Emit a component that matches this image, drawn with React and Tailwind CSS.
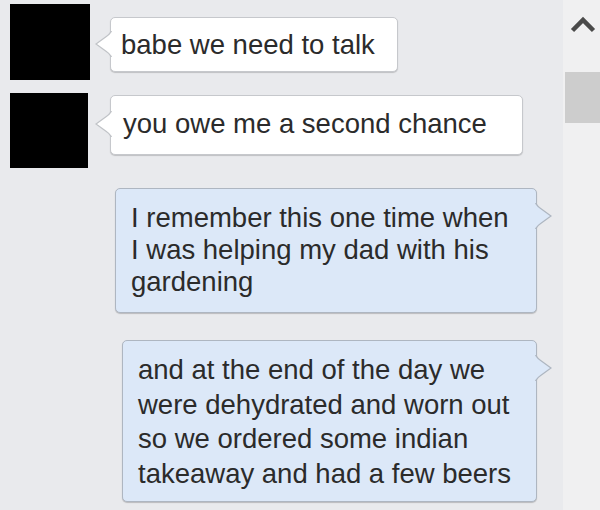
import React from "react";

function ArrowLeft({ fill, stroke, top }) {
  return (
    <svg
      className="absolute"
      style={{ left: -16, top }}
      width="17"
      height="26"
      viewBox="0 0 17 26"
    >
      <path d="M17 0 L17 26 C15 24 14 22 12 21 L1 13 L12 5 C14 4 15 2 17 0 Z" fill={fill} />
      <path
        d="M16.5 0 C15 2 14 4 12 5 L1 13 L12 21 C14 22 15 24 16.5 26"
        fill="none"
        stroke={stroke}
        strokeWidth="1.3"
      />
    </svg>
  );
}

function ArrowRight({ fill, stroke, top }) {
  return (
    <svg
      className="absolute"
      style={{ right: -16, top }}
      width="17"
      height="26"
      viewBox="0 0 17 26"
    >
      <path d="M0 0 L0 26 C2 24 3 22 5 21 L16 13 L5 5 C3 4 2 2 0 0 Z" fill={fill} />
      <path
        d="M0.5 0 C2 2 3 4 5 5 L16 13 L5 21 C3 22 2 24 0.5 26"
        fill="none"
        stroke={stroke}
        strokeWidth="1.3"
      />
    </svg>
  );
}

export default function App() {
  const font = { fontFamily: '"Liberation Sans", Arial, sans-serif' };
  return (
    <div
      className="w-[600px] h-[510px] flex overflow-hidden bg-[#e9eaed] text-[#2b2b2b]"
      style={font}
    >
      {/* main chat area */}
      <div className="flex-1 flex flex-col pt-[4px] pl-[10px]">
        {/* row 1 */}
        <div className="flex items-start">
          <div className="w-[80px] h-[76px] bg-black" />
          <div className="relative ml-[20px] mt-[13px] w-[288px] h-[55px] flex items-center pl-[10px] bg-white border border-[#c6c8cc] rounded-[5px] shadow-[0_1px_1px_rgba(0,0,0,0.18)]">
            <ArrowLeft fill="#ffffff" stroke="#c0c3c7" top={13} />
            <span className="text-[27.5px] leading-[30px] whitespace-nowrap">babe we need to talk</span>
          </div>
        </div>
        {/* row 2 */}
        <div className="flex items-start mt-[13px]">
          <div className="w-[78px] h-[75px] bg-black" />
          <div className="relative ml-[22px] mt-[2px] w-[413px] h-[60px] flex items-center pl-[12px] pb-[3px] bg-white border border-[#c6c8cc] rounded-[5px] shadow-[0_1px_1px_rgba(0,0,0,0.18)]">
            <ArrowLeft fill="#ffffff" stroke="#c0c3c7" top={15} />
            <span className="text-[27.5px] leading-[30px] whitespace-nowrap">you owe me a second chance</span>
          </div>
        </div>
        {/* row 3 */}
        <div className="flex justify-end pr-[26px] mt-[20px]">
          <div className="relative w-[422px] h-[125px] pl-[15px] pt-[13px] bg-[#dce8f8] border border-[#aeb6c1] rounded-[5px] shadow-[0_1px_1px_rgba(0,0,0,0.2)]">
            <ArrowRight fill="#dce8f8" stroke="#aeb6c1" top={14} />
            <p className="text-[27.5px] leading-[32px] whitespace-nowrap">
              I remember this one time when
              <br />
              I was helping my dad with his
              <br />
              gardening
            </p>
          </div>
        </div>
        {/* row 4 */}
        <div className="flex justify-end pr-[26px] mt-[27px]">
          <div className="relative w-[415px] h-[162px] pl-[15px] pt-[12px] bg-[#dce8f8] border border-[#aeb6c1] rounded-[5px] shadow-[0_1px_1px_rgba(0,0,0,0.2)]">
            <ArrowRight fill="#dce8f8" stroke="#aeb6c1" top={14} />
            <p className="text-[27.5px] leading-[34.5px] whitespace-nowrap">
              and at the end of the day we
              <br />
              were dehydrated and worn out
              <br />
              so we ordered some indian
              <br />
              takeaway and had a few beers
            </p>
          </div>
        </div>
      </div>
      {/* scrollbar */}
      <div className="w-[37px] h-full bg-[#f0f0f1] flex flex-col items-end">
        <div className="w-full flex justify-center pt-[15px] pl-[3px]">
          <svg width="26" height="18" viewBox="0 0 26 18">
            <path d="M2.5 15.5 L13 5 L23.5 15.5" fill="none" stroke="#4a4a4a" strokeWidth="4.5" />
          </svg>
        </div>
        <div className="mt-[39px] w-[35px] h-[51px] bg-[#cdcdcd]" />
      </div>
    </div>
  );
}
